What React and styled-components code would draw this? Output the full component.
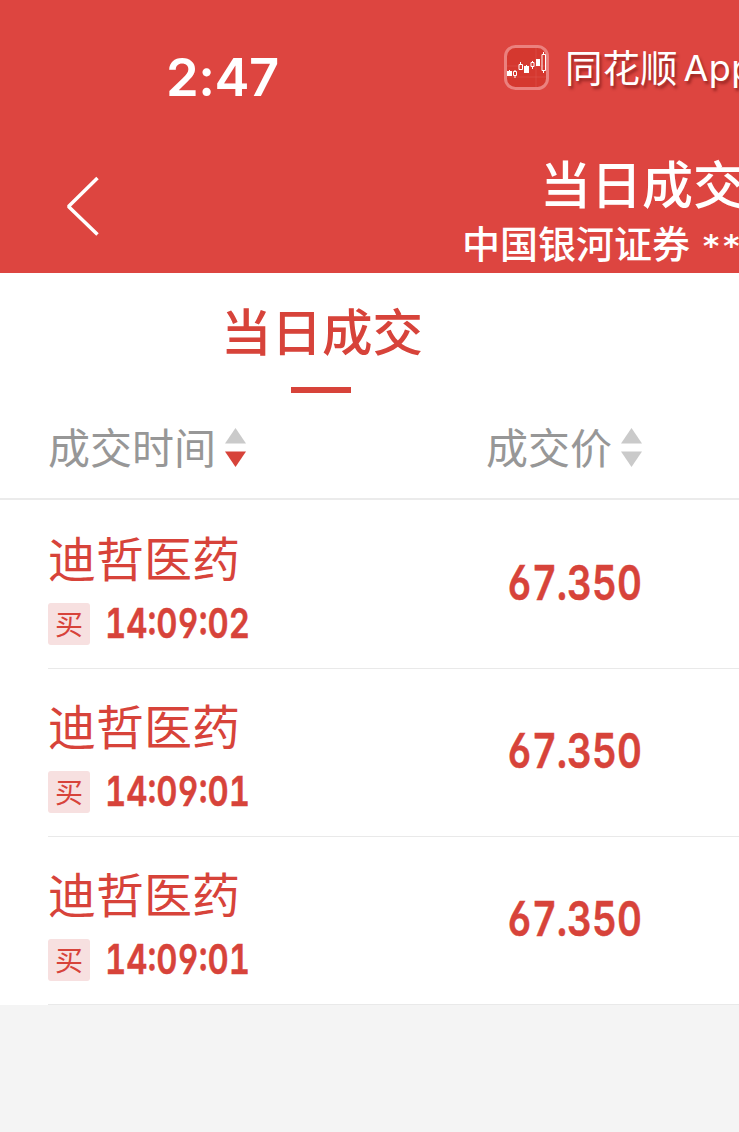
import React from "react";
import styled, { createGlobalStyle } from "styled-components";

const RED = "#d7433a";

const Global = createGlobalStyle`
  body { margin: 0; background: #f4f4f4; overflow: hidden; }
  * { box-sizing: border-box; }
`;

const Screen = styled.div`
  width: 739px;
  height: 1132px;
  overflow: hidden;
  background: #f4f4f4;
  color: ${RED};
  font-family: "Noto Sans CJK SC", sans-serif;
  white-space: nowrap;
`;

const Header = styled.header`
  height: 273px;
  color: #fff;
  background: #dd4540;
`;

const StatusBar = styled.div`
  display: flex;
  height: 150px;
  padding-left: 166px;
`;

const Clock = styled.div`
  flex: none;
  width: 338px;
  padding-top: 45px;
  font: 600 52.5px/64px Inter, sans-serif;
  letter-spacing: -0.5px;
`;

const AppIcon = styled.svg`
  flex: none;
  width: 45px;
  height: 45px;
  margin-top: 45px;
`;

const AppName = styled.div`
  display: flex;
  gap: 6px;
  padding: 38px 0 0 16px;
  font-size: 37.5px;
  line-height: 56px;
  text-shadow: 2px 3px 3px rgba(70, 0, 0, 0.45);
`;

const Latin = styled.span`
  padding-top: 2px;
  font-family: Inter, sans-serif;
  font-size: 36px;
  letter-spacing: 0.4px;
`;

const NavBar = styled.div`
  display: flex;
  height: 123px;
  padding-left: 65px;
`;

const BackIcon = styled.svg`
  flex: none;
  width: 36px;
  height: 62px;
  margin-top: 25px;
`;

const Titles = styled.div`
  padding-left: 361px;
`;

const Title = styled.h1`
  margin: -3px 0 0;
  padding-left: 78px;
  font-size: 51px;
  font-weight: 500;
  line-height: 70px;
`;

const Account = styled.div`
  display: flex;
  gap: 13px;
  font-size: 38px;
  font-weight: 500;
  line-height: 50px;
`;

const Mask = styled.span`
  padding-top: 3px;
  font: 700 31px/50px "DejaVu Sans", sans-serif;
  letter-spacing: 4px;
`;

const Tab = styled.div`
  display: flex;
  flex-direction: column;
  align-items: center;
  width: 642px;
  height: 120px;
  padding: 18px 0 0 2px;
  font-size: 50.5px;
  font-weight: 500;
  line-height: 76px;

  &::after {
    content: "";
    width: 60px;
    height: 6px;
    margin: 20px 2px 0 0;
    background: ${RED};
  }
`;

const Panel = styled.main`
  background: #fff;
`;

const Columns = styled.div`
  display: flex;
  height: 107px;
  padding-left: 48px;
  border-bottom: 2px solid #ebebeb;
`;

const Column = styled.div`
  display: flex;
  gap: 9px;
  width: ${(p) => p.$width}px;
  padding-top: 22px;
  color: #979797;
  font-size: 42px;
  line-height: 62px;
`;

const SortIcon = styled.svg`
  width: 22px;
  height: 40px;
  margin-top: 12px;
`;

const Rows = styled.div`
  padding-top: 1px;
`;

const Row = styled.div`
  display: flex;
  height: 168px;
  margin-left: 48px;
  border-bottom: 1px solid #e9e9e9;
`;

const Trade = styled.div`
  width: 459px;
  padding-top: 20px;
`;

const Name = styled.div`
  font-size: 48px;
  line-height: 70px;
`;

const Detail = styled.div`
  display: flex;
  align-items: center;
  gap: 15px;
  height: 42px;
  margin-top: 12px;
`;

const Badge = styled.span`
  width: 42px;
  height: 42px;
  border-radius: 3px;
  background: #f7e0e0;
  font-size: 28px;
  line-height: 41px;
  text-align: center;
`;

const Digits = styled.span`
  height: 62px;
  transform: scaleX(${(p) => p.$stretch});
  transform-origin: left center;
  font: 600 ${(p) => p.$size}px/60px Inter, sans-serif;
  font-feature-settings: "cv03", "cv04", "tnum";
  -webkit-text-stroke: 0.5px ${RED};
`;

const Price = styled.div`
  display: flex;
  padding-top: 52px;
`;

function Sort({ active }) {
  return (
    <SortIcon viewBox="0 0 22 40">
      <path d="M10.500 1 21 16.500H0Z" fill="#cacaca" />
      <path d="M0 24.500h21L10.500 40Z" fill={active ? RED : "#cacaca"} />
    </SortIcon>
  );
}

const trades = [
  { time: "14:09:02", price: "67.350" },
  { time: "14:09:01", price: "67.350" },
  { time: "14:09:01", price: "67.350" },
];

export default function App() {
  return (
    <Screen>
      <Global />
      <Header>
        <StatusBar>
          <Clock>2:47</Clock>
          <AppIcon viewBox="0 0 45 45" fill="none">
            <rect x="1.5" y="1.5" width="42" height="42" rx="10" fill="#d5382f" stroke="#eb817e" strokeWidth="3" />
            <path d="M3 21H42M3 32H42M32 3V42" stroke="#de514a" strokeWidth=".6" />
            <path d="M3 26h5v5H3zM20 21h5v7h-5zM32 14h4v7h-4z" fill="#fff" />
            <path d="M5.5 25v1M11 25v1M11 31v2M16.500 17v2M22.500 20v1M28.500 16v1M28.500 22v2M39.500 7v2M39.500 26v2" stroke="#fff" />
            <path d="M9.500 26.500h3v4h-3zM15 19.500h3.500v5H15zM27 17.500h3v4h-3zM38 9.500h3.500v16H38z" stroke="#fff" />
          </AppIcon>
          <AppName>
            <span>同花顺</span>
            <Latin>App</Latin>
          </AppName>
        </StatusBar>
        <NavBar>
          <BackIcon viewBox="0 0 36 62" fill="none">
            <path d="M32.500 3 3.500 31.500l29 28" stroke="#fff" strokeWidth="3.500" strokeLinejoin="bevel" />
          </BackIcon>
          <Titles>
            <Title>当日成交</Title>
            <Account>
              <span>中国银河证券</span>
              <Mask>***</Mask>
            </Account>
          </Titles>
        </NavBar>
      </Header>
      <Panel>
        <Tab>当日成交</Tab>
        <Columns>
          <Column $width={438}>
            成交时间
            <Sort active />
          </Column>
          <Column $width={253}>
            成交价
            <Sort />
          </Column>
        </Columns>
        <Rows>
          {trades.map((t, i) => (
            <Row key={i}>
              <Trade>
                <Name>迪哲医药</Name>
                <Detail>
                  <Badge>买</Badge>
                  <Digits $size={41.5} $stretch={0.79}>{t.time}</Digits>
                </Detail>
              </Trade>
              <Price>
                <Digits $size={47.5} $stretch={0.81}>{t.price}</Digits>
              </Price>
            </Row>
          ))}
        </Rows>
      </Panel>
    </Screen>
  );
}
